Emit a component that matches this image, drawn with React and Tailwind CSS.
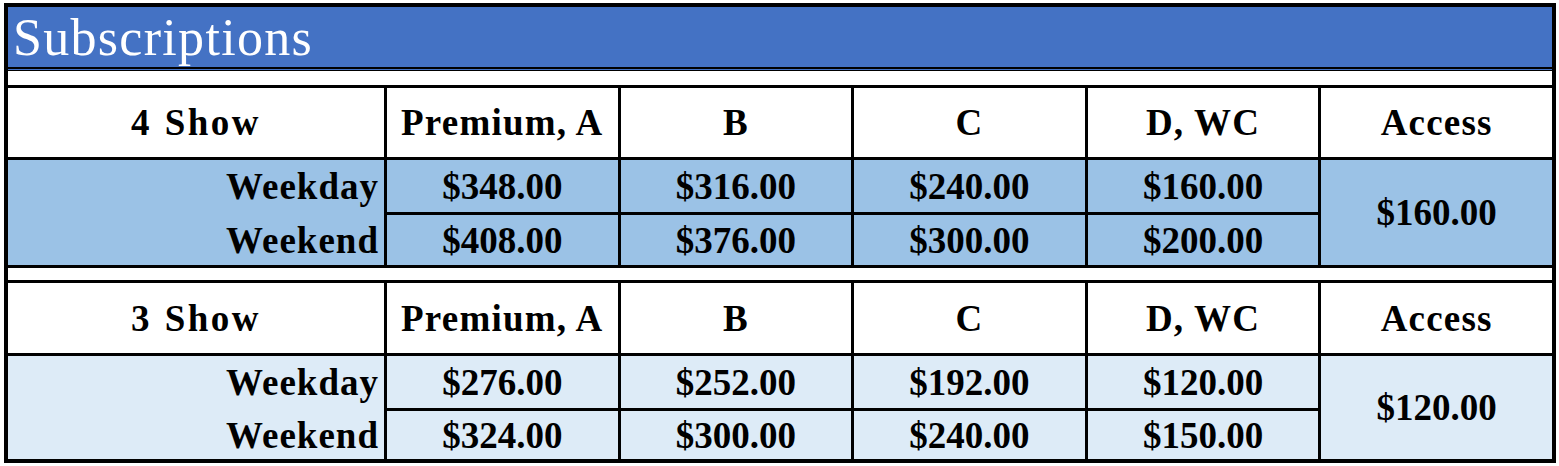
import React from "react";

const blocks = [
    {
        title: "4 Show",
        headH: "h-[69px]",
        rowH: ["h-[52px]", "h-[50px]"],
        bg: "bg-[#9BC2E6]",
        rows: [
            ["Weekday", "$348.00", "$316.00", "$240.00", "$160.00"],
            ["Weekend", "$408.00", "$376.00", "$300.00", "$200.00"],
        ],
        access: "$160.00",
    },
    {
        title: "3 Show",
        headH: "h-[70px]",
        rowH: ["h-[52px]", "h-[48px]"],
        bg: "bg-[#DDEBF7]",
        rows: [
            ["Weekday", "$276.00", "$252.00", "$192.00", "$120.00"],
            ["Weekend", "$324.00", "$300.00", "$240.00", "$150.00"],
        ],
        access: "$120.00",
    },
];

const heads = ["Premium, A", "B", "C", "D, WC", "Access"];

function PriceBlock({ block, last }) {
    return (
        <div
            className={`grid grid-cols-[376px_repeat(5,minmax(0,1fr))] gap-[3px] bg-black border-t-[3px] border-black ${
                last ? "" : "border-b-[3px]"
            }`}
        >
            <div
                className={`${block.headH} bg-white flex items-center justify-center tracking-[2.5px] [word-spacing:1px]`}
            >
                {block.title}
            </div>
            {heads.map((h) => (
                <div
                    key={h}
                    className={`${block.headH} bg-white flex items-center justify-center tracking-[1.2px]`}
                >
                    {h}
                </div>
            ))}

            {/* label column spans both price rows, no line between */}
            <div className={`row-span-2 ${block.bg} flex flex-col gap-[3px]`}>
                {block.rows.map((r, i) => (
                    <div
                        key={r[0]}
                        className={`${block.rowH[i]} flex items-center justify-end pr-[5px] tracking-[1px]`}
                    >
                        {r[0]}
                    </div>
                ))}
            </div>
            {block.rows[0].slice(1).map((v, i) => (
                <div
                    key={"a" + i}
                    className={`${block.rowH[0]} ${block.bg} flex items-center justify-center`}
                >
                    {v}
                </div>
            ))}
            <div
                className={`row-span-2 ${block.bg} flex items-center justify-center col-start-6 row-start-2`}
            >
                {block.access}
            </div>
            {block.rows[1].slice(1).map((v, i) => (
                <div
                    key={"b" + i}
                    className={`${block.rowH[1]} ${block.bg} flex items-center justify-center`}
                >
                    {v}
                </div>
            ))}
        </div>
    );
}

export default function App() {
    return (
        <div className="w-[1559px] h-[466px] bg-white pt-[3px] pl-[4px]">
            <div className="w-[1552px] border-4 border-black bg-white [font-family:'Liberation_Serif',serif] font-bold text-[37px] leading-none text-black">
                <div className="h-[60px] bg-[#4472C4] flex items-center pl-[5px] pt-[2px] text-white font-normal text-[52px] tracking-[1.3px]">
                    Subscriptions
                </div>
                <div className="h-[2px] bg-black" />
                <div className="h-[1px] bg-[#4472C4]" />
                <div className="h-[1px] bg-black" />
                <div className="h-[14px] bg-white" />
                <PriceBlock block={blocks[0]} />
                <div className="h-[12px] bg-white" />
                <PriceBlock block={blocks[1]} last />
            </div>
        </div>
    );
}
